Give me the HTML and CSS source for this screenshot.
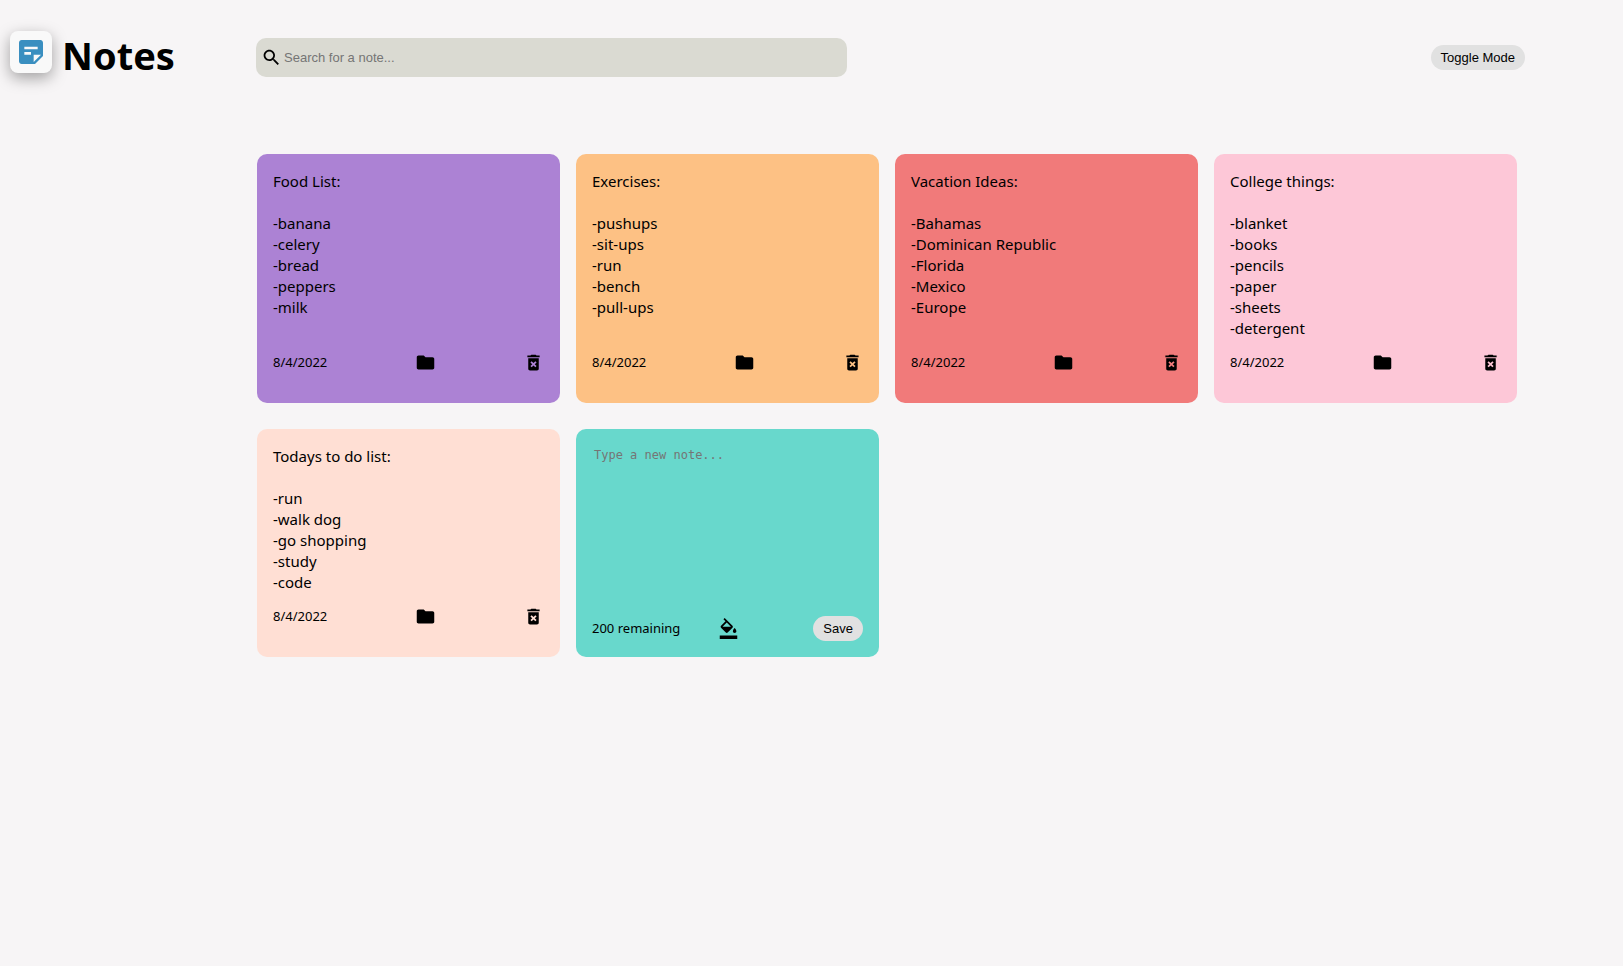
FILE: index.html
```
<!DOCTYPE html>
<html lang="en">
<head>
<meta charset="utf-8">
<meta name="viewport" content="width=device-width, initial-scale=1">
<title>Notes</title>
<link rel="stylesheet" href="styles.css">
</head>
<body>
<svg class="sprite" aria-hidden="true">
  <symbol id="folder" viewBox="0 0 24 24"><path d="M10 4H4c-1.1 0-1.99.9-1.99 2L2 18c0 1.1.9 2 2 2h16c1.1 0 2-.9 2-2V8c0-1.1-.9-2-2-2h-8l-2-2z"/></symbol>
  <symbol id="trash" viewBox="0 0 24 24"><path d="M6 19c0 1.1.9 2 2 2h8c1.1 0 2-.9 2-2V7H6v12zm2.46-7.12l1.41-1.41L12 12.59l2.12-2.12 1.41 1.41L13.41 14l2.12 2.12-1.41 1.41L12 15.41l-2.12 2.12-1.41-1.41L10.59 14l-2.13-2.12zM15.5 4l-1-1h-5l-1 1H5v2h14V4z"/></symbol>
  <symbol id="fill" viewBox="0 0 24 24"><path d="M16.56 8.94L7.62 0 6.21 1.41l2.38 2.38-5.15 5.15a1.49 1.49 0 0 0 0 2.12l5.5 5.5c.29.29.68.44 1.06.44s.77-.15 1.06-.44l5.5-5.5c.59-.58.59-1.53 0-2.12zM5.21 10L10 5.21 14.79 10H5.21zM19 11.5s-2 2.17-2 3.5c0 1.1.9 2 2 2s2-.9 2-2c0-1.33-2-3.5-2-3.5zM2 20h20v4H2v-4z"/></symbol>
</svg>
<header class="header">
  <div class="brand">
    <span class="logo"><svg viewBox="0 0 24 24" aria-hidden="true"><path d="M19 3H5c-1.1 0-2 .9-2 2v14c0 1.1.9 2 2 2h10l6-6V5c0-1.1-.9-2-2-2zm-7 11H7v-2h5v2zm5-4H7V8h10v2zm-3 9.5V14h5.5L14 19.5z"/></svg></span>
    <h1 class="title">Notes</h1>
  </div>
  <label class="search">
    <svg class="icon" viewBox="0 0 24 24" aria-hidden="true"><path d="M15.5 14h-.79l-.28-.27C15.41 12.59 16 11.11 16 9.5 16 5.91 13.09 3 9.5 3S3 5.91 3 9.5 5.91 16 9.5 16c1.61 0 3.09-.59 4.23-1.57l.27.28v.79l5 4.99L20.49 19l-4.99-5zm-6 0C7.01 14 5 11.99 5 9.5S7.01 5 9.5 5 14 7.01 14 9.5 11.99 14 9.5 14z"/></svg>
    <input class="search-input" type="text" placeholder="Search for a note..." aria-label="Search for a note">
  </label>
  <button class="pill" type="button">Toggle Mode</button>
</header>
<main class="notes">
  <article class="note purple">
    <p class="text">Food List:

-banana
-celery
-bread
-peppers
-milk</p>
    <footer class="note-footer"><small>8/4/2022</small><button class="icon-button" type="button" aria-label="Folder"><svg class="icon"><use href="#folder"/></svg></button><button class="icon-button" type="button" aria-label="Delete"><svg class="icon"><use href="#trash"/></svg></button></footer>
  </article>
  <article class="note orange">
    <p class="text">Exercises:

-pushups
-sit-ups
-run
-bench
-pull-ups</p>
    <footer class="note-footer"><small>8/4/2022</small><button class="icon-button" type="button" aria-label="Folder"><svg class="icon"><use href="#folder"/></svg></button><button class="icon-button" type="button" aria-label="Delete"><svg class="icon"><use href="#trash"/></svg></button></footer>
  </article>
  <article class="note red">
    <p class="text">Vacation Ideas:

-Bahamas
-Dominican Republic
-Florida
-Mexico
-Europe</p>
    <footer class="note-footer"><small>8/4/2022</small><button class="icon-button" type="button" aria-label="Folder"><svg class="icon"><use href="#folder"/></svg></button><button class="icon-button" type="button" aria-label="Delete"><svg class="icon"><use href="#trash"/></svg></button></footer>
  </article>
  <article class="note pink">
    <p class="text">College things:

-blanket
-books
-pencils
-paper
-sheets
-detergent</p>
    <footer class="note-footer"><small>8/4/2022</small><button class="icon-button" type="button" aria-label="Folder"><svg class="icon"><use href="#folder"/></svg></button><button class="icon-button" type="button" aria-label="Delete"><svg class="icon"><use href="#trash"/></svg></button></footer>
  </article>
  <article class="note peach">
    <p class="text">Todays to do list:

-run
-walk dog
-go shopping
-study
-code</p>
    <footer class="note-footer"><small>8/4/2022</small><button class="icon-button" type="button" aria-label="Folder"><svg class="icon"><use href="#folder"/></svg></button><button class="icon-button" type="button" aria-label="Delete"><svg class="icon"><use href="#trash"/></svg></button></footer>
  </article>
  <form class="note teal">
    <textarea class="editor" placeholder="Type a new note..." aria-label="New note"></textarea>
    <footer class="form-footer"><small>200 remaining</small><button class="icon-button" type="button" aria-label="Note colour"><svg class="icon"><use href="#fill"/></svg></button><button class="pill save" type="button">Save</button></footer>
  </form>
</main>
</body>
</html>
```
FILE: styles.css
```
* { box-sizing: border-box; }

body {
  margin: 0;
  min-height: 100vh;
  background: #f7f5f6;
  color: #000;
  font: 15px/21px "Segoe UI", "Noto Sans", "Open Sans", sans-serif;
}

.sprite { display: none; }

.icon {
  display: block;
  flex: none;
  width: 21px;
  height: 21px;
  fill: currentColor;
}

.header {
  display: grid;
  grid-template-columns: 246px minmax(0, 591px) 1fr;
  align-items: center;
  padding: 28px 98px 0 10px;
}

.brand {
  display: flex;
  align-items: center;
  gap: 10px;
}

.logo {
  display: grid;
  place-items: center;
  width: 42px;
  height: 42px;
  margin-bottom: 10px;
  border-radius: 8px;
  background: #f9f9f9;
  box-shadow: 0 5px 15px rgba(0, 0, 0, 0.35);
}

.logo svg {
  width: 32px;
  height: 32px;
  fill: #3a8fc0;
}

.title {
  margin: 0 0 4px;
  font-size: 38px;
  line-height: 54px;
}

.search {
  display: flex;
  align-items: center;
  gap: 2px;
  height: 39px;
  padding: 0 5px;
  border-radius: 10px;
  background: #dadad2;
}

.search-input {
  flex: 1;
  min-width: 0;
  padding: 0;
  border: 0;
  outline: 0;
  background: transparent;
  font: 13px "Liberation Sans", Arial, sans-serif;
}

.search-input::placeholder,
.editor::placeholder { color: #757575; }

.pill {
  justify-self: end;
  height: 25px;
  padding: 0 10px;
  border: 0;
  border-radius: 13px;
  background: #e1e1e1;
  color: #000;
  font: 13px "Liberation Sans", Arial, sans-serif;
}

.notes {
  display: grid;
  grid-template-columns: repeat(4, minmax(0, 1fr));
  gap: 26px 16px;
  padding: 68px 106px 26px 257px;
}

.note {
  display: flex;
  flex-direction: column;
  justify-content: space-between;
  padding: 17px 16px 16px;
  border-radius: 10px;
}

.purple { background: #ac82d4; }
.orange { background: #fdc184; }
.red { background: #f17a7a; }
.pink { background: #fdc7d7; }
.peach { background: #ffdfd4; }
.teal { background: #68d8cc; }

.text {
  margin: 0;
  white-space: pre-wrap;
}

.note-footer,
.form-footer {
  display: flex;
  align-items: center;
}

.note-footer {
  justify-content: space-between;
  padding: 13px 0 14px;
}

.form-footer { gap: 38px; }

.save { margin-left: auto; }

small { font-size: 13px; }

.icon-button {
  padding: 0;
  border: 0;
  background: none;
  color: inherit;
}

.editor {
  flex: 1;
  width: 100%;
  padding: 2px;
  border: 0;
  outline: 0;
  resize: none;
  background: transparent;
  font: 12px "DejaVu Sans Mono", monospace;
}
```
